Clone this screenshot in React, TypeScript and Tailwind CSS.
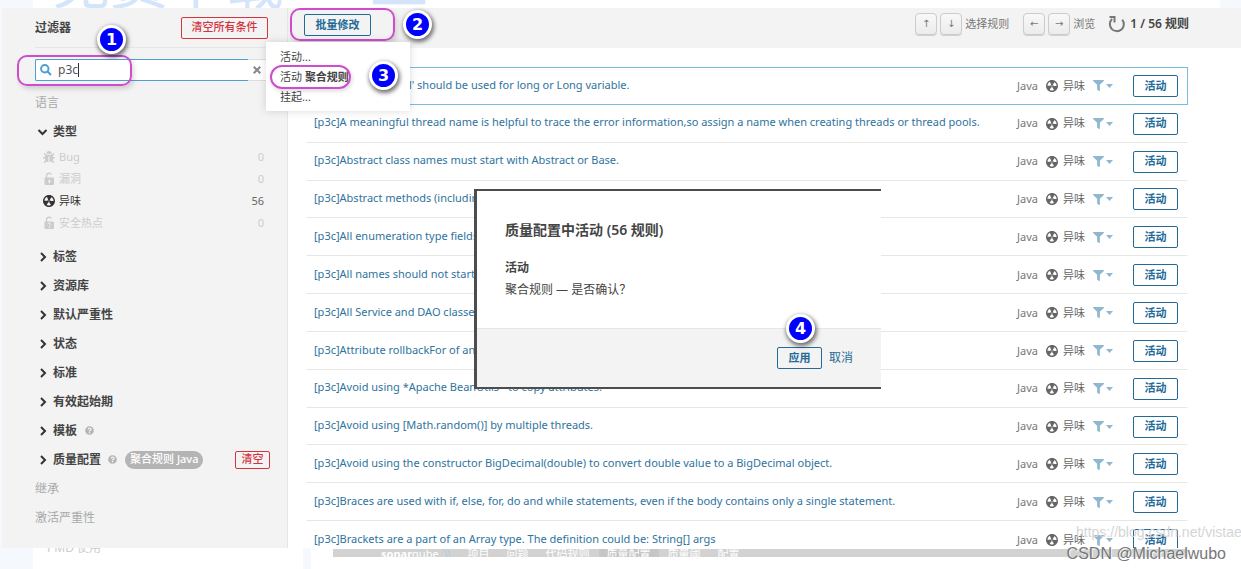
import type { ReactNode } from "react";
import { FaBug, FaFilter, FaQuestionCircle } from "react-icons/fa";

const rules = [
  "[p3c]'L' instead of 'l' should be used for long or Long variable.",
  "[p3c]A meaningful thread name is helpful to trace the error information,so assign a name when creating threads or thread pools.",
  "[p3c]Abstract class names must start with Abstract or Base.",
  "[p3c]Abstract methods (including",
  "[p3c]All enumeration type fields",
  "[p3c]All names should not start",
  "[p3c]All Service and DAO classes",
  "[p3c]Attribute rollbackFor of an",
  "[p3c]Avoid using *Apache BeanUtils* to copy attributes.",
  "[p3c]Avoid using [Math.random()] by multiple threads.",
  "[p3c]Avoid using the constructor BigDecimal(double) to convert double value to a BigDecimal object.",
  "[p3c]Braces are used with if, else, for, do and while statements, even if the body contains only a single statement.",
  "[p3c]Brackets are a part of an Array type. The definition could be: String[] args",
];

const facets = ["标签", "资源库", "默认严重性", "状态", "标准", "有效起始期"];

const SmellIcon = () => (
  <svg className="size-4 shrink-0" viewBox="0 0 16 16" fill="currentColor">
    <path d="M8 2C4.7 2 2 4.7 2 8s2.7 6 6 6 6-2.7 6-6-2.7-6-6-6zm-.5 5.5h.9v.9h-.9v-.9zm-3.8.2c-.1 0-.2-.1-.2-.2 0-.4.1-1.2.6-2S5.3 4.2 5.6 4c.2 0 .3 0 .3.1l1.3 2.3c0 .1 0 .2-.1.2-.1.2-.2.3-.3.5-.1.2-.2.4-.2.5 0 .1-.1.2-.2.2l-2.7-.1zM9.9 12c-.3.2-1.1.5-2 .5-.9 0-1.7-.3-2-.5-.1 0-.1-.2-.1-.3l1.3-2.3c0-.1.1-.1.2-.1.2.1.3.1.5.1s.4 0 .5-.1c.1 0 .2 0 .2.1l1.3 2.3c.2.2.2.3.1.3zm2.5-4.1L9.7 8c-.1 0-.2-.1-.2-.2 0-.2-.1-.4-.2-.5 0-.1-.2-.3-.3-.4-.1 0-.1-.1-.1-.2l1.3-2.3c.1-.1.2-.1.3-.1.3.2 1 .7 1.5 1.5s.6 1.6.6 2c0 0-.1.1-.2.1z" />
  </svg>
);

const LockIcon = ({ question = false }) => (
  <svg className="size-4 shrink-0" viewBox="0 0 16 16" fill="none">
    <path d="M5.5 7V4.8a2.6 2.6 0 0 1 5-1" stroke="currentColor" strokeWidth="1.3" />
    <rect x="3.5" y="6.5" width="9.5" height="7.5" rx="1" fill="currentColor" />
    {question ? (
      <path d="M6.9 9.2c0-1.6 2.8-1.5 2.7.1-.1.9-1.3.8-1.3 2M8.3 12v1" stroke="#f3f3f3" strokeWidth="1" />
    ) : (
      <path d="M8.3 8.7a1.2 1.2 0 0 1 .6 2.2v1.3H7.7v-1.3a1.2 1.2 0 0 1 .6-2.2z" fill="#f3f3f3" />
    )}
  </svg>
);

const Chevron = ({ open = false }) => (
  <svg className="size-3 shrink-0" viewBox="0 0 12 12" fill="none" stroke="#333" strokeWidth="2">
    {open ? <path d="M1.5 4 5.5 8l4-4" /> : <path d="M4 2 8 6l-4 4" />}
  </svg>
);

const StepBadge = ({ className, children }: { className: string; children: ReactNode }) => (
  <span
    className={`absolute z-30 flex size-[29px] items-center justify-center rounded-full border-[3px] border-white bg-[#0000ff] font-['DejaVu_Sans',sans-serif] text-base font-bold text-white shadow-[1px_2px_4px_1px_rgba(0,0,0,0.55)] ${className}`}
  >
    {children}
  </span>
);

const Key = ({ children }: { children: ReactNode }) => (
  <kbd className="flex h-[22px] w-[22px] items-center justify-center rounded-sm border border-[#ccc] bg-linear-to-b from-[#f8f8f8] to-[#ececec] font-['DejaVu_Sans',sans-serif] text-[10px] text-[#777] shadow-[0_1px_0_#d0d0d0]">
    {children}
  </kbd>
);

const Facet = ({ name, open = false, children }: { name: string; open?: boolean; children?: ReactNode }) => (
  <div className="flex h-[29px] items-center pl-0.5">
    <button className="flex items-center gap-1 font-semibold text-[#444]">
      <Chevron open={open} />
      {name}
    </button>
    {children}
  </div>
);

const TypeItem = ({ icon, name, count }: { icon: ReactNode; name: string; count: number }) => (
  <li className={`flex h-[22px] items-center pr-1 pl-1.5 text-[11px] ${count ? "text-[#333]" : "text-[#ccc]"}`}>
    <span className="flex w-4 justify-center">{icon}</span>
    <span className="ml-0.5 grow">{name}</span>
    <span className={count ? "text-[#666]" : ""}>{count}</span>
  </li>
);

const Sidebar = () => (
  <aside className="w-[286px] shrink-0 border-r border-[#e6e6e6] bg-[#f3f3f3] pr-[19px] pl-[33px]">
    <div className="flex h-10 items-center justify-between border-b border-[#e6e6e6]">
      <h1 className="font-semibold">过滤器</h1>
      <button className="h-[22px] w-[87px] rounded-xs border border-[#d4333f] text-[11px] font-medium text-[#d4333f]">
        清空所有条件
      </button>
    </div>
    <div className="relative mt-[11px] flex h-[22px]">
      <svg className="absolute top-[5px] left-[5px] size-3" viewBox="0 0 12 12" fill="none" stroke="#4b9fd5" strokeWidth="2">
        <circle cx="4.8" cy="4.8" r="3.7" />
        <path d="m7.5 7.5 3.5 3.5" />
      </svg>
      <input
        aria-label="搜索规则"
        defaultValue="p3c"
        className="w-[213px] rounded-l-xs border border-r-0 border-[#4b9fd5] bg-white pl-[22px] text-[#555] outline-none"
      />
      <span className="absolute top-1 left-[43px] h-3.5 w-px bg-[#333]" />
      <button aria-label="清除" className="flex grow items-center border-y border-[#ddd] bg-white pl-[5px]">
        <svg className="size-2" viewBox="0 0 8 8" stroke="#888" strokeWidth="2">
          <path d="m.7.7 6.6 6.6M7.3.7.7 7.3" />
        </svg>
      </button>
      <span className="absolute -top-1 -left-[18px] h-[31px] w-[115px] rounded-[10px] border-2 border-[#cf4ccf] shadow-[2px_3px_5px_rgba(0,0,0,0.15)]" />
    </div>
    <div className="mt-[7px] flex h-[29px] items-center text-[#aaa]">语言</div>
    <Facet name="类型" open />
    <ul className="mb-2">
      <TypeItem icon={<FaBug className="size-3" />} name="Bug" count={0} />
      <TypeItem icon={<LockIcon />} name="漏洞" count={0} />
      <TypeItem icon={<SmellIcon />} name="异味" count={56} />
      <TypeItem icon={<LockIcon question />} name="安全热点" count={0} />
    </ul>
    {facets.map((name) => (
      <Facet key={name} name={name} />
    ))}
    <Facet name="模板">
      <FaQuestionCircle className="ml-2 size-[9px] text-[#b4b4b4]" />
    </Facet>
    <Facet name="质量配置">
      <FaQuestionCircle className="ml-[7px] size-[9px] text-[#b4b4b4]" />
      <span className="ml-2 flex h-[18px] items-center rounded-full bg-[#b4b4b4] px-[5px] text-[11px] font-medium whitespace-nowrap text-white">
        聚合规则 Java
      </span>
      <button className="-mr-0.5 ml-auto h-[18px] w-[35px] rounded-xs border border-[#d4333f] text-[11px] font-medium text-[#d4333f]">
        清空
      </button>
    </Facet>
    <div className="flex h-[29px] items-center text-[#aaa]">继承</div>
    <div className="flex h-[29px] items-center text-[#aaa]">激活严重性</div>
  </aside>
);

const BulkMenu = () => (
  <div className="absolute top-[34px] -left-[22px] z-20 h-[69px] w-[144px] bg-white px-3.5 pt-[5px] shadow-[0_0_8px_rgba(0,0,0,0.15)]">
    <ul className="text-[11px] leading-5 text-[#444]">
      <li><button>活动...</button></li>
      <li><button>活动 <b className="font-semibold">聚合规则</b></button></li>
      <li><button>挂起...</button></li>
    </ul>
    <span className="absolute top-[23px] left-1 h-[24px] w-[81px] rounded-xl border-2 border-[#cf4ccf] shadow-[1px_2px_4px_rgba(0,0,0,0.15)]" />
    <StepBadge className="top-[19px] left-[103px]">3</StepBadge>
  </div>
);

const Toolbar = () => (
  <header className="relative flex h-10 items-center bg-[#f3f3f3] pr-[52px] pl-4 text-[11px] text-[#777]">
    <BulkMenu />
    <button className="-mt-1.5 h-[22px] w-[67px] rounded-xs border border-[#236a97] text-[11px] font-semibold text-[#236a97]">
      批量修改
    </button>
    <span className="absolute top-0 left-0.5 h-[33px] w-[105px] rounded-[10px] border-2 border-[#cf4ccf] shadow-[2px_3px_5px_rgba(0,0,0,0.15)]" />
    <StepBadge className="top-0.5 left-[115px]">2</StepBadge>
    <div className="-mt-2 ml-auto flex items-center gap-[3px]">
      <Key>↑</Key>
      <Key>↓</Key>
      <span className="mr-[11px]">选择规则</span>
      <Key>←</Key>
      <Key>→</Key>
      <span>浏览</span>
      <button aria-label="刷新" className="ml-2.5">
        <svg className="size-[18px]" viewBox="0 0 18 18" fill="none" stroke="#777" strokeWidth="2">
          <path d="M14.2 4.6A7 7 0 1 1 4.1 4" />
          <path d="M1.5 2h5v5.5" />
        </svg>
      </button>
      <span className="ml-px text-xs font-semibold text-[#444]">1 / 56 规则</span>
    </div>
  </header>
);

const RuleRow = ({ name, selected }: { name: string; selected: boolean }) => (
  <li
    className={`flex items-center border pr-[9px] pl-[7px] text-[11px] text-[#236a97] ${
      selected ? "border-[#7dbbdd]" : "border-transparent border-b-[#e6e6e6]"
    }`}
  >
    <a href="#rule" className="-mt-0.5 min-w-0 grow text-[#2f739e]">{name}</a>
    <span className="text-[#777]">Java</span>
    <span className="ml-1.5 flex items-center gap-[3px] whitespace-nowrap text-[#666]">
      <SmellIcon />
      异味
    </span>
    <button aria-label="筛选相似规则" className="ml-2 flex items-center gap-0.5 text-[#8fb8d0]">
      <FaFilter className="size-[11px]" />
      <svg className="h-1 w-[7px]" viewBox="0 0 7 4" fill="currentColor">
        <path d="M0 0h7L3.5 4z" />
      </svg>
    </button>
    <button className="ml-5 h-[22px] w-[45px] shrink-0 rounded-xs border border-[#236a97] font-semibold">
      活动
    </button>
  </li>
);

const ConfirmDialog = () => (
  <div
    role="dialog"
    aria-labelledby="dialog-title"
    className="absolute top-[189px] left-[474px] z-20 w-[407px] border-y-2 border-l-[3px] border-[#4d4d4d] bg-white text-[#444]"
  >
    <div className="h-[137px] px-7 pt-[29px]">
      <h2 id="dialog-title" className="text-sm leading-5 font-semibold">质量配置中活动 (56 规则)</h2>
      <h3 className="mt-[17px] leading-[22px] font-semibold">活动</h3>
      <p className="leading-[22px]">聚合规则 — 是否确认？</p>
    </div>
    <footer className="flex h-[59px] items-center justify-end gap-[7px] border-t border-[#e6e6e6] bg-[#f3f3f3] pr-7">
      <button className="h-[22px] w-[45px] rounded-xs border border-[#236a97] text-[11px] font-semibold text-[#236a97]">应用</button>
      <button className="text-[#236a97]">取消</button>
    </footer>
    <StepBadge className="top-[123px] left-[309px]">4</StepBadge>
  </div>
);

export default function App() {
  return (
    <div className="relative overflow-hidden bg-[#f5f9fd] font-['Noto_Sans','Noto_Sans_CJK_SC',sans-serif] text-xs text-[#444]">
      <div className="relative mr-[21px] ml-[33px] h-2 overflow-hidden bg-white">
        <span className="absolute bottom-[-14px] left-[19px] flex gap-[86px] text-[58px] leading-[80px] whitespace-nowrap text-[#d4e4fb]">
          免费下载<span>工</span>
        </span>
      </div>
      <div className="flex h-[540px] pl-0.5">
        <Sidebar />
        <main className="min-w-0 grow bg-white">
          <Toolbar />
          <ul className="mt-[19px] mr-[53px] ml-[18px] grid h-[492px] auto-rows-fr">
            {rules.map((name, i) => (
              <RuleRow key={name} name={name} selected={i === 0} />
            ))}
          </ul>
        </main>
      </div>
      <div className="relative ml-[33px] flex h-[21px] overflow-hidden bg-white">
        <span className="h-[5px] w-[270px] overflow-hidden pl-3.5 text-[#ccc]">
          <span className="-mt-2 block leading-4">PMD 使用</span>
        </span>
        <span className="w-2 bg-[#f5f9fd]" />
        <nav className="mt-px mr-[53px] ml-[22px] flex h-2 grow items-start gap-[17px] overflow-hidden bg-[#d2d2d2] pl-12 text-[11px] leading-[10px] text-white">
          <span className="flex gap-1">
            <span><b>sonar</b>qube</span>
            <svg className="size-2" viewBox="0 0 8 8" fill="none" stroke="#a9cbe2">
              <path d="M0 0q4 2 4 8M4 0q3 3 3 8" />
            </svg>
          </span>
          <span>项目</span>
          <span>问题</span>
          <span>代码规则</span>
          <span className="-mx-2 bg-[#c6c6c6] px-2">质量配置</span>
          <span>质量阈</span>
          <span>配置</span>
        </nav>
      </div>
      <StepBadge className="top-[25px] left-[97px]">1</StepBadge>
      <ConfirmDialog />
      <div className="absolute top-[524px] left-[1076px] z-20 font-['Liberation_Sans',sans-serif] text-sm leading-4 whitespace-nowrap text-[#d5d5d5]">
        https://blog.csdn.net/vistae
      </div>
      <div className="absolute top-[544px] right-[15px] z-20 font-['Liberation_Sans',sans-serif] text-base leading-5 whitespace-nowrap text-[#777] [text-shadow:1px_1px_1px_#fff]">
        CSDN @Michaelwubo
      </div>
    </div>
  );
}
